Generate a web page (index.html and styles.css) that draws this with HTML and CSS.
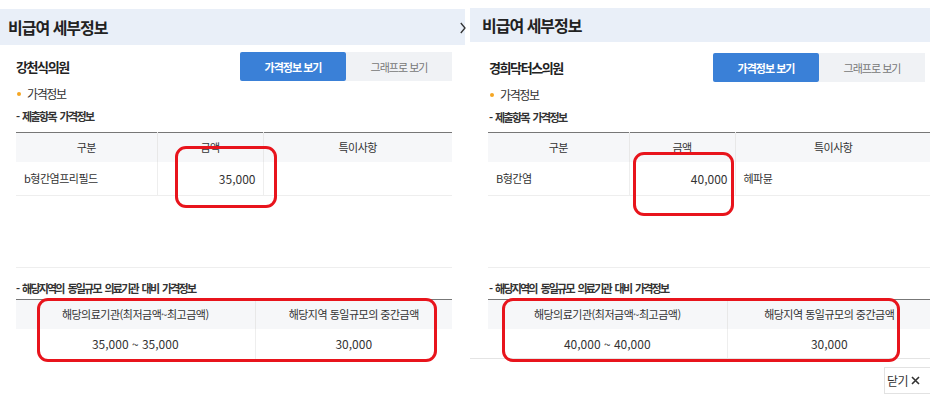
FILE: index.html
```html
<!DOCTYPE html>
<html lang="ko">
<head>
<meta charset="utf-8">
<title>비급여 세부정보</title>
<link rel="stylesheet" href="styles.css">
</head>
<body>
<div class="page">

  <!-- 왼쪽 : 강천식의원 -->
  <section class="panel panel-left">
    <div class="modal-head">
      <h2>비급여 세부정보</h2>
      <svg class="chev" width="6" height="12" viewBox="0 0 6 12"><polyline points="0.8,1 5,6 0.8,11" fill="none" stroke="#333" stroke-width="1.3"/></svg>
    </div>
    <div class="modal-body">
      <div class="name-row">
        <h3>강천식의원</h3>
        <div class="tabs">
          <button class="tab on">가격정보 보기</button>
          <button class="tab">그래프로 보기</button>
        </div>
      </div>
      <p class="bullet">가격정보</p>
      <p class="sub">- 제출항목 가격정보</p>
      <table class="tbl tbl-items">
        <tr><th class="c1">구분</th><th class="c2">금액</th><th>특이사항</th></tr>
        <tr><td class="txt">b형간염프리필드</td><td class="amt">35,000</td><td class="txt"></td></tr>
      </table>
      <div class="blank"></div>
      <p class="sub sub-low">- 해당지역의 동일규모 의료기관 대비 가격정보</p>
      <table class="tbl tbl-cmp">
        <tr><th class="w1">해당의료기관(최저금액~최고금액)</th><th>해당지역 동일규모의 중간금액</th></tr>
        <tr><td class="num">35,000 ~ 35,000</td><td class="num">30,000</td></tr>
      </table>
    </div>
    <span class="mark mark-a"></span>
    <span class="mark mark-b"></span>
  </section>

  <!-- 오른쪽 : 경희닥터스의원 -->
  <section class="panel panel-right">
    <div class="modal-head">
      <h2>비급여 세부정보</h2>
    </div>
    <div class="modal-body">
      <div class="name-row">
        <h3>경희닥터스의원</h3>
        <div class="tabs">
          <button class="tab on">가격정보 보기</button>
          <button class="tab">그래프로 보기</button>
        </div>
      </div>
      <p class="bullet">가격정보</p>
      <p class="sub">- 제출항목 가격정보</p>
      <table class="tbl tbl-items">
        <tr><th class="c1">구분</th><th class="c2">금액</th><th>특이사항</th></tr>
        <tr><td class="txt">B형간염</td><td class="amt">40,000</td><td class="txt">헤파뮨</td></tr>
      </table>
      <div class="blank"></div>
      <p class="sub sub-low">- 해당지역의 동일규모 의료기관 대비 가격정보</p>
      <table class="tbl tbl-cmp">
        <tr><th class="w1">해당의료기관(최저금액~최고금액)</th><th>해당지역 동일규모의 중간금액</th></tr>
        <tr><td class="num">40,000 ~ 40,000</td><td class="num">30,000</td></tr>
      </table>
    </div>
    <div class="modal-foot">
      <button class="close">닫기<svg class="x" width="9" height="9" viewBox="0 0 9 9"><path d="M1 1L8 8M8 1L1 8" stroke="#333" stroke-width="1.6"/></svg></button>
    </div>
    <span class="mark mark-a"></span>
    <span class="mark mark-b"></span>
  </section>

</div>
</body>
</html>
```

FILE: styles.css
```css
* {
  box-sizing: border-box;
}

body {
  margin: 0;
  background: #fff;
  font-family: "Noto Sans CJK KR", "Noto Sans", sans-serif;
  color: #333;
}

.page {
  display: flex;
  gap: 4px;
  width: 930px;
  height: 401px;
  overflow: hidden;
}

.panel {
  position: relative;
  flex: none;
}

.panel-left {
  width: 466px;
}

.panel-right {
  width: 460px;
}

/* 모달 머리 */
.modal-head {
  display: flex;
  align-items: center;
  justify-content: space-between;
  background: #e9eff8;
}

.modal-head h2 {
  margin: 0;
  font-size: 16px;
  font-weight: 700;
  letter-spacing: -1px;
  color: #222;
}

.panel-left .modal-head {
  margin-top: 9px;
  height: 36px;
  width: 466px;
  padding-left: 8px;
  background: linear-gradient(to right, #e9eff8 465px, #fff 465px);
}

.panel-right .modal-head {
  margin-top: 8px;
  height: 34px;
  padding-left: 12px;
}

.chev {
  display: block;
  margin-top: 2px;
}

/* 본문 */
.panel-left .modal-body {
  padding: 0 14px 0 16px;
}

.panel-right .modal-body {
  padding: 0 0 0 19px;
}

.name-row {
  display: flex;
  align-items: center;
  justify-content: space-between;
}

.panel-left .name-row {
  margin-top: 7px;
}

.panel-right .name-row {
  margin-top: 11px;
  padding-right: 5px;
}

.name-row h3 {
  margin: 0;
  font-size: 13px;
  font-weight: 700;
  letter-spacing: -1.4px;
  color: #222;
}

.tabs {
  display: flex;
}

.tab {
  width: 106px;
  height: 29px;
  border: 0;
  padding: 0;
  font-family: inherit;
  font-size: 11px;
  letter-spacing: -1px;
  background: #f0f2f5;
  color: #777;
}

.tab.on {
  background: #3a80d7;
  color: #fff;
  font-weight: 700;
  border-radius: 2px;
}

.bullet {
  margin: 5px 0 0 1px;
  font-size: 12px;
  line-height: 16px;
  letter-spacing: -1.4px;
  color: #333;
}

.bullet::before {
  content: "";
  display: inline-block;
  width: 4px;
  height: 4px;
  border-radius: 50%;
  background: #f5a623;
  margin: 0 6px 4px 0;
  vertical-align: middle;
}

.sub {
  margin: 6px 0 0 0;
  font-size: 11px;
  line-height: 16px;
  font-weight: 700;
  letter-spacing: -1.6px;
  word-spacing: 2px;
  color: #333;
}

.sub-low {
  margin-top: 12px;
  letter-spacing: -1.8px;
  word-spacing: 2.5px;
}

/* 표 */
.tbl {
  width: 100%;
  border-collapse: collapse;
  border-top: 1px solid #777;
  font-size: 11px;
  letter-spacing: -0.5px;
  color: #333;
}

.panel-left .tbl {
  margin-top: 8px;
}

.panel-right .tbl {
  margin-top: 7px;
  margin-left: -1px;
  width: 443px;
}

.tbl th {
  height: 29px;
  background: #f6f7f9;
  font-weight: 400;
  text-align: center;
  border-left: 1px solid #e8e8e8;
}

.tbl th:first-child,
.tbl td:first-child {
  border-left: 0;
}

.tbl td {
  height: 34px;
  border-left: 1px solid #eee;
  border-bottom: 1px solid #eee;
}

.tbl-items .c1 {
  width: 141px;
}

.tbl-items .c2 {
  width: 106px;
}

.tbl .txt {
  padding-left: 8px;
}

.tbl .amt {
  text-align: right;
  padding-right: 7px;
  font-size: 12px;
  letter-spacing: 0;
}

.blank {
  height: 72px;
  border-bottom: 1px solid #eee;
}

.panel-right .blank {
  margin-left: -1px;
}

.tbl-cmp {
  margin-top: 3px !important;
}

.tbl-cmp .w1 {
  width: 239px;
}

.tbl-cmp td {
  height: 30px;
  border-bottom: 0;
}

.tbl .num {
  text-align: center;
  font-size: 12px;
  letter-spacing: 0;
}

/* 모달 바닥 */
.modal-foot {
  border-top: 1px solid #e4e4e4;
  margin-top: -1px;
  display: flex;
  justify-content: flex-end;
  padding-top: 8px;
}

.close {
  display: flex;
  align-items: center;
  gap: 3px;
  height: 27px;
  width: 46px;
  padding: 0 0 0 2px;
  border: 1px solid #e2e2e2;
  border-right: 0;
  background: #fff;
  font-family: inherit;
  font-size: 12px;
  letter-spacing: -0.5px;
  color: #333;
}

.close .x {
  display: block;
}

/* 빨간 강조 표시 */
.mark {
  position: absolute;
  border: 3px solid #e8141c;
  border-radius: 11px;
}

.panel-left .mark-a {
  left: 175px;
  top: 146px;
  width: 102px;
  height: 62px;
}

.panel-left .mark-b {
  left: 37px;
  top: 298px;
  width: 400px;
  height: 64px;
}

.panel-right .mark-a {
  left: 163px;
  top: 152px;
  width: 101px;
  height: 64px;
}

.panel-right .mark-b {
  left: 32px;
  top: 298px;
  width: 398px;
  height: 64px;
}
```
